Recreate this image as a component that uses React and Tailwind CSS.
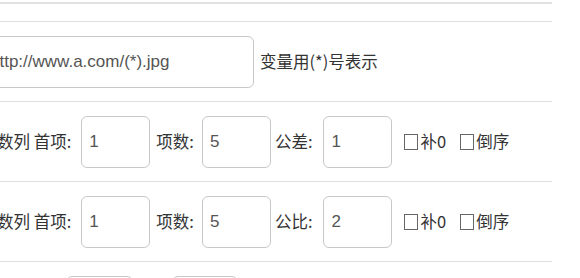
import React from "react";

const cjk = "font-['Microsoft_YaHei','Noto_Sans_CJK_SC',sans-serif]";

const Field = ({ value, className = "" }) => (
  <input
    readOnly
    value={value}
    className={`h-[52px] shrink-0 rounded-[6px] border border-[#c8c8c8] bg-white px-[7px] font-['Liberation_Sans',Arial,sans-serif] text-[17px] text-[#555] outline-none ${className}`}
  />
);

const Check = ({ label }) => (
  <span className="flex items-center">
    <span className="inline-block h-[16px] w-[14px] border border-[#666]" />
    <span className="ml-[2px]">{label}</span>
  </span>
);

const SeriesRow = ({ title, stepLabel, step }) => (
  <div className="flex h-[80px] items-center border-t border-[#dedede]">
    <div className="-ml-[36px] flex items-center">
      <span>{title} 首项:</span>
      <Field value="1" className="ml-[10px] w-[69px]" />
      <span className="ml-[6px]">项数:</span>
      <Field value="5" className="ml-[8px] w-[69px]" />
      <span className="ml-[4px]">{stepLabel}:</span>
      <Field value={step} className="ml-[11px] w-[69px]" />
      <div className="ml-[12px] flex items-center gap-[14px]">
        <Check label="补0" />
        <Check label="倒序" />
      </div>
    </div>
  </div>
);

export default function App() {
  return (
    <div className={`h-[278px] w-[580px] overflow-hidden bg-white text-[16.5px] text-[#333] ${cjk}`}>
      <div className="w-[552px] pt-[2px]">
        <div className="h-[19px] border-t-2 border-[#e2e2e2]" />
        <div className="flex h-[80px] items-center border-t border-[#dedede]">
          <div className="-ml-[18px] flex items-center">
            <Field value="http://www.a.com/(*).jpg" className="w-[272px]" />
            <span className="ml-[6px]">变量用(*)号表示</span>
          </div>
        </div>
        <SeriesRow title="等差数列" stepLabel="公差" step="1" />
        <SeriesRow title="等比数列" stepLabel="公比" step="2" />
        <div className="flex h-[80px] items-center border-t border-[#dedede]">
          <div className="flex items-center">
            <span className="w-[66px]">范围</span>
            <Field value="1" className="w-[67px]" />
            <span className="ml-[6px] w-[33px]">到</span>
            <Field value="9" className="w-[66px]" />
          </div>
        </div>
      </div>
    </div>
  );
}
